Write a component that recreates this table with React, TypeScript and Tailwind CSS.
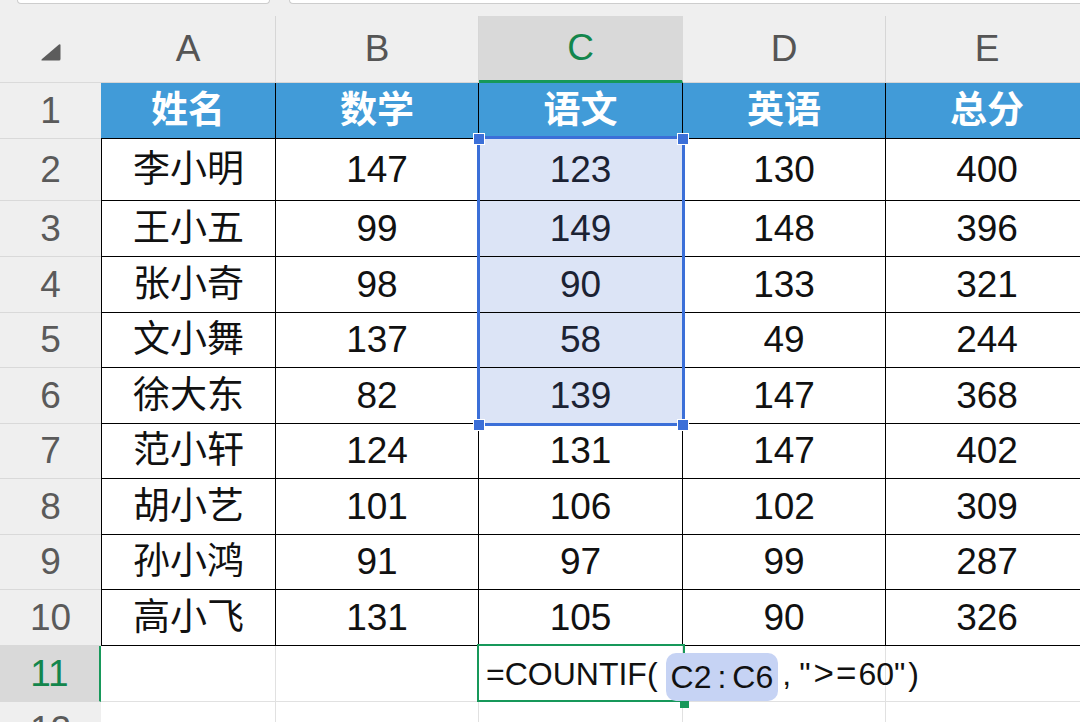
const data: [string, number, number, number, number][] = [
  ["李小明", 147, 123, 130, 400],
  ["王小五", 99, 149, 148, 396],
  ["张小奇", 98, 90, 133, 321],
  ["文小舞", 137, 58, 49, 244],
  ["徐大东", 82, 139, 147, 368],
  ["范小轩", 124, 131, 147, 402],
  ["胡小艺", 101, 106, 102, 309],
  ["孙小鸿", 91, 97, 99, 287],
  ["高小飞", 131, 105, 90, 326],
];

const heads = ["姓名", "数学", "语文", "英语", "总分"];
const letters = ["A", "B", "C", "D", "E"];
const widths = ["w-[175px]", "w-[203px]", "w-[204px]", "w-[203px]", "w-[203px]"];
const rowHeights = ["h-[62px]", "h-[56px]", "h-[56px]", "h-[55px]", "h-[56px]", "h-[55px]", "h-[56px]", "h-[55px]", "h-[56px]"];

function RowHead({ n, h, active = false }: { n: number; h: string; active?: boolean }) {
  return (
    <div
      className={`w-[101px] shrink-0 ${h} flex items-center justify-center border-b border-[#d9d9d9] text-[37px] ${
        active ? "bg-[#d9d9d9] text-[#13864c] border-r-2 border-r-[#17985a]" : "bg-[#efefef] text-[#5a5a5a]"
      }`}
    >
      {n}
    </div>
  );
}

export default function App() {
  return (
    <div className="w-[1080px] h-[722px] overflow-hidden bg-[#efefef] relative font-['Liberation_Sans','Noto_Sans_CJK_SC',sans-serif] text-[#111]">
      {/* toolbar edge */}
      <div className="h-4 flex pl-[17px] gap-[19px]">
        <div className="w-[253px] h-[4px] bg-white border border-t-0 border-[#cdcdcd] rounded-b-[6px]" />
        <div className="flex-1 h-[4px] bg-white border-b border-l border-[#cdcdcd] rounded-bl-[6px]" />
      </div>

      {/* column header */}
      <div className="flex h-[67px]">
        <div className="w-[101px] shrink-0 flex items-center justify-center pt-[5px] border-b border-[#dadada]">
          <svg width="21" height="18" viewBox="0 0 21 18">
            <path d="M19 1.5 Q20.5 0.5 20.5 2.5 L20.5 16 Q20.5 17.5 19 17.5 L2.5 17.5 Q0.5 17.5 2 16 Z" fill="#5c5c5c" />
          </svg>
        </div>
        {letters.map((l, i) => (
          <div
            key={l}
            className={`${widths[i]} shrink-0 flex items-center justify-center text-[37px] border-r border-[#d6d6d6] ${
              i === 2
                ? "bg-[#d9d9d9] text-[#13864c] border-b-[3px] border-b-[#17985a] border-r-[#d9d9d9]"
                : "text-[#555] border-b border-b-[#d6d6d6]"
            }`}
          >
            {l}
          </div>
        ))}
      </div>

      {/* row 1 */}
      <div className="flex h-[56px]">
        <RowHead n={1} h="h-[56px]" />
        {heads.map((t, i) => (
          <div
            key={t}
            className={`${widths[i]} shrink-0 flex items-center justify-center bg-[#419bd8] text-white font-bold text-[37px] border-r border-b border-black`}
          >
            {t}
          </div>
        ))}
      </div>

      {/* rows 2-10 */}
      {data.map((r, ri) => {
        const inSel = ri < 5;
        return (
          <div key={ri} className="flex">
            <RowHead n={ri + 2} h={rowHeights[ri]} />
            {r.map((v, ci) => (
              <div
                key={ci}
                className={`${widths[ci]} ${rowHeights[ri]} shrink-0 flex items-center justify-center border-r border-b border-black text-[37px] ${
                  ci === 0 ? "border-l" : ""
                } ${ci === 2 && inSel ? "bg-[#dce4f6] text-[#1b2233]" : "bg-white"}`}
              >
                {v}
              </div>
            ))}
          </div>
        );
      })}

      {/* row 11 */}
      <div className="flex h-[56px]">
        <RowHead n={11} h="h-[56px]" active />
        {widths.map((w, i) => (
          <div
            key={i}
            className={`${w} shrink-0 bg-white border-r border-b border-[#e1e1e1] ${
              i === 2 ? "relative z-10 flex items-center pl-[7px] whitespace-nowrap text-[32px] text-[#111]" : ""
            }`}
          >
            {i === 2 && (
              <>
                <div className="absolute left-[-2px] top-[-2px] w-[208px] h-[58px] border-2 border-[#17985a] pointer-events-none" />
                <div className="absolute left-[201px] top-[54px] w-[9px] h-[8px] bg-[#17985a]" />
                <span className="relative">=COUNTIF(</span>
                <span className="relative ml-[8px] mt-[6px] h-[48px] px-[5px] flex items-center bg-[#c6d3f4] rounded-[10px]">
                  C2<span className="mx-[6px]">:</span>C6
                </span>
                <span className="relative ml-[4px]">,</span>
                <span className="relative ml-[8px]">"</span>
                <span className="relative ml-[3px] text-[35px]">&gt;</span>
                <span className="relative ml-[2px] text-[35px]">=</span>
                <span className="relative ml-[2px]">60"</span>
                <span className="relative ml-[3px]">)</span>
              </>
            )}
          </div>
        ))}
      </div>

      {/* row 12 */}
      <div className="flex h-[56px]">
        <RowHead n={12} h="h-[56px]" />
        {widths.map((w, i) => (
          <div key={i} className={`${w} shrink-0 bg-white border-r border-b border-[#e1e1e1]`} />
        ))}
      </div>

      {/* selection C2:C6 */}
      <div className="absolute left-[477px] top-[136px] w-[208px] h-[290px] border-[3px] border-[#3b6fd8] pointer-events-none" />
      <div className="absolute left-[473px] top-[133px] w-[12px] h-[12px] bg-[#3b6fd8] border border-white" />
      <div className="absolute left-[677px] top-[133px] w-[12px] h-[12px] bg-[#3b6fd8] border border-white" />
      <div className="absolute left-[473px] top-[419px] w-[12px] h-[12px] bg-[#3b6fd8] border border-white" />
      <div className="absolute left-[677px] top-[419px] w-[12px] h-[12px] bg-[#3b6fd8] border border-white" />
    </div>
  );
}
